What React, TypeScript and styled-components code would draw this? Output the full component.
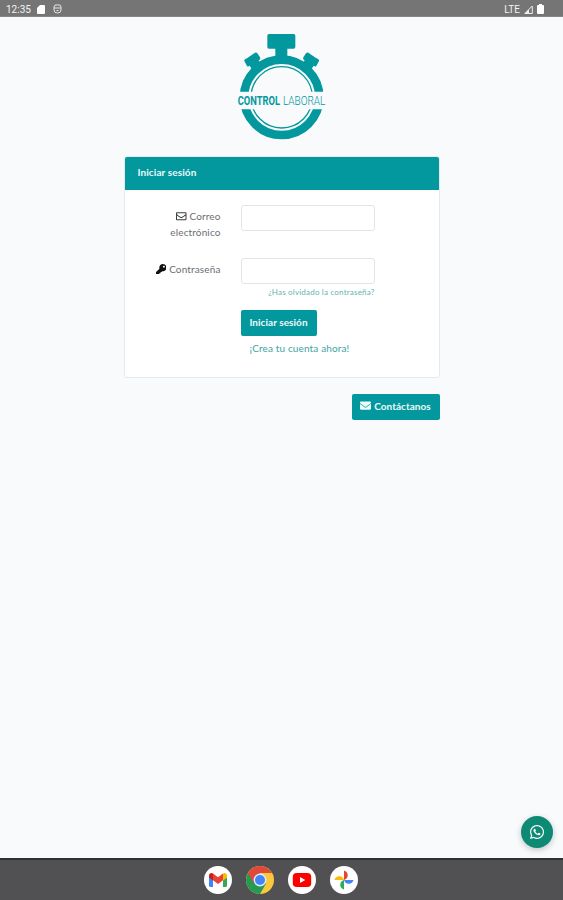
import React from "react";
import styled, { createGlobalStyle } from "styled-components";
import { FaRegEnvelope, FaEnvelope, FaKey, FaWhatsapp } from "react-icons/fa";

const teal = "#03989e";

const GlobalStyle = createGlobalStyle`
  * { box-sizing: border-box; }
  body { margin: 0; font-family: Lato, "Open Sans", sans-serif; }
`;

const Screen = styled.div`
  display: flex;
  flex-direction: column;
  width: 563px;
  height: 900px;
  overflow: hidden;
  background: #f8fafc;
`;

const StatusBar = styled.header`
  display: flex;
  align-items: center;
  justify-content: space-between;
  flex: none;
  height: 17px;
  padding: 2px 19px 0 6px;
  background: #757575;
  border-bottom: 1px solid #858585;
  color: #f4f4f4;
  font: 10px Roboto, sans-serif;
`;

const StatusGroup = styled.div<{ $gap: number }>`
  display: flex;
  align-items: center;
  gap: ${(p) => p.$gap}px;
  svg { display: block; }
`;

const Main = styled.main`
  flex: 1;
  display: flex;
  flex-direction: column;
  align-items: center;
  padding-top: 8px;
`;

const Logo = styled.svg`
  display: block;
  flex: none;
  width: 115px;
  height: 120px;
  margin-left: 2px;
`;

const Wordmark = styled.text<{ $weight: number }>`
  fill: ${teal};
  font-family: Roboto, sans-serif;
  font-size: 36px;
  font-weight: ${(p) => p.$weight};
`;

const Content = styled.div`
  display: flex;
  flex-direction: column;
  align-items: flex-end;
  width: 316px;
  margin-top: 11px;
`;

const Card = styled.section`
  width: 316px;
  height: 222px;
  border: 1px solid #e4eaeb;
  border-radius: 3px;
  background: #fff;
  overflow: hidden;
`;

const CardHeader = styled.h1`
  margin: -1px -1px 0;
  height: 34px;
  padding: 0 14px;
  background: ${teal};
  color: #eafafa;
  font-size: 10px;
  font-weight: 700;
  line-height: 33px;
  letter-spacing: 0.1px;
`;

const Form = styled.form`
  display: grid;
  grid-template-columns: 96px 134px;
  column-gap: 20px;
  padding-top: 15px;
`;

const Label = styled.label<{ $top: number }>`
  padding: ${(p) => p.$top}px 0 0 20px;
  text-align: right;
  color: #6b6f72;
  font-size: 10px;
  line-height: 16px;
  letter-spacing: 0.13px;
  svg { font-size: 10.5px; vertical-align: -1px; color: #3c4043; }
`;

const KeyIcon = styled(FaKey)`
  && { color: #111; }
`;

const Field = styled.div<{ $height: number }>`
  height: ${(p) => p.$height}px;
`;

const Input = styled.input`
  display: block;
  width: 134px;
  height: 26px;
  border: 1px solid #e2e5e7;
  border-radius: 3px;
  background: #fff;
  outline: none;
`;

const ForgotLink = styled.a`
  display: block;
  margin: 2px 0 0 -10px;
  color: #5fb5b3;
  text-align: right;
  font-size: 8px;
  line-height: 12px;
  white-space: nowrap;
  letter-spacing: 0.2px;
`;

const Button = styled.button<{ $width: number }>`
  display: flex;
  align-items: center;
  justify-content: center;
  gap: 3px;
  width: ${(p) => p.$width}px;
  height: 26px;
  padding: 0 0 2px;
  border: 0;
  border-radius: 2px;
  background: ${teal};
  color: #edfafa;
  font: 700 10px Lato, sans-serif;
  letter-spacing: 0.05px;
  white-space: nowrap;
`;

const Actions = styled.div`
  grid-column: 2;
  margin-top: -1px;
`;

const SignUpLink = styled.a`
  display: block;
  margin: 4px 0 0 9px;
  color: #40a5a2;
  font-size: 10px;
  line-height: 16px;
  letter-spacing: 0.14px;
`;

const ContactRow = styled.div`
  margin-top: 15.5px;
`;

const ChatButton = styled.button`
  position: absolute;
  left: 521px;
  top: 816px;
  display: grid;
  place-items: center;
  width: 32px;
  height: 32px;
  padding: 0;
  border: 0;
  border-radius: 50%;
  background: #0c8a74;
  color: #fff;
  font-size: 16px;
  box-shadow: 0 2px 6px rgba(0, 0, 0, 0.22);
`;

const Dock = styled.nav`
  display: flex;
  justify-content: center;
  align-items: center;
  gap: 14px;
  flex: none;
  height: 42px;
  padding-right: 1px;
  border-top: 2px solid #303032;
  background: #515153;
`;

const DockIcon = styled.svg`
  display: block;
  width: 28px;
  height: 28px;
`;

const StopwatchLogo = () => (
  <Logo viewBox="0 0 345 360" role="img" aria-label="Control Laboral">
    <defs>
      <clipPath id="dial-halves">
        <path d="M0 0h345v200H0zM0 253h345v107H0z" />
      </clipPath>
    </defs>
    <g fill={teal}>
      <path d="M132 27h74q5 0 5 5v34q0 5-5 5h-19v29h-36V71h-19q-5 0-5-5V32q0-5 5-5z" />
      <path id="knob" d="M67 99 90 83q4-2 7 2l8 12q2 4-1 7l-3 2 12 18-25 20-14-22-3 2q-3 2-5-1l-8-15q-2-5 9-9z" />
      <path transform="translate(340 0) scale(-1 1)" d="M67 99 90 83q4-2 7 2l8 12q2 4-1 7l-3 2 12 18-25 20-14-22-3 2q-3 2-5-1l-8-15q-2-5 9-9z" />
    </g>
    <g fill="none" stroke={teal} clipPath="url(#dial-halves)">
      <circle cx="170" cy="217" r="113" strokeWidth="26" />
      <circle cx="170" cy="217" r="92" strokeWidth="4" />
    </g>
    <Wordmark $weight={700} x="38" y="239" textLength="127" lengthAdjust="spacingAndGlyphs">CONTROL</Wordmark>
    <Wordmark $weight={300} x="174" y="239" textLength="127" lengthAdjust="spacingAndGlyphs">LABORAL</Wordmark>
  </Logo>
);

const GmailIcon = () => (
  <DockIcon viewBox="0 0 28 28">
    <circle cx="14" cy="14" r="14" fill="#fff" />
    <path d="M5 10v9.500q0 1.500 1.500 1.500H9V12z" fill="#4285f4" />
    <path d="M23 10v9.500q0 1.500-1.500 1.500H19V12z" fill="#34a853" />
    <path d="M19 9v5.500l4-3V9.400C23 7.200 20.600 6.200 19 7.500z" fill="#fbbc04" />
    <path d="M5 9.400v2.100l4 3V9L9 7.500C7.400 6.200 5 7.200 5 9.400z" fill="#c5221f" />
    <path d="M9 7.500l5 3.800 5-3.800v6.700l-5 3.800-5-3.800z" fill="#ea4335" />
  </DockIcon>
);

const ChromeIcon = () => (
  <DockIcon viewBox="0 0 28 28">
    <circle cx="14" cy="14" r="14" fill="#fbc83c" />
    <path d="M14 14 1.880 7A14 14 0 0 0 14 28l6-10.500z" fill="#239b56" />
    <path d="M14 14 8 17.500 1.880 7a14 14 0 0 1 24.240 0H14z" fill="#df483b" />
    <circle cx="14" cy="14" r="6.400" fill="#dfeafc" />
    <circle cx="14" cy="14" r="5" fill="#4285f4" />
  </DockIcon>
);

const YoutubeIcon = () => (
  <DockIcon viewBox="0 0 28 28">
    <circle cx="14" cy="14" r="14" fill="#fff" />
    <rect x="4.800" y="7" width="18.400" height="14" rx="3.800" fill="#f00" />
    <path d="m12 11 5.300 3-5.300 3z" fill="#fff" />
  </DockIcon>
);

const PhotosIcon = () => (
  <DockIcon viewBox="0 0 28 28">
    <circle cx="14" cy="14" r="14" fill="#fff" />
    <path d="M14 14V4.500a4.900 4.900 0 0 1 0 9.500z" fill="#ea4335" />
    <path d="M14 14h9.500a4.900 4.900 0 0 1-9.500 0z" fill="#4285f4" />
    <path d="M14 14v9.500a4.900 4.900 0 0 1 0-9.500z" fill="#34a853" />
    <path d="M14 14H4.500a4.900 4.900 0 0 1 9.500 0z" fill="#fbbc04" />
  </DockIcon>
);

export default function App() {
  return (
    <Screen>
      <GlobalStyle />
      <StatusBar>
        <StatusGroup $gap={6}>
          <span>12:35</span>
          <svg width="8" height="9" viewBox="0 0 8 9"><path d="M3 0h4q1 0 1 1v7q0 1-1 1H1Q0 9 0 8V3z" fill="#fff" /></svg>
          <svg width="11" height="10" viewBox="-2 0 11 10" fill="none" stroke="#e6e6e6"><path d="M2 1h5l1 2v3q0 3-3.500 3T1 6V3zM1 4h7M3.500 6.500h2" /></svg>
        </StatusGroup>
        <StatusGroup $gap={4}>
          <span>LTE</span>
          <svg width="9" height="9" viewBox="0 0 9 9"><path d="M8.300 1v7.500H.8z" fill="none" stroke="#eee" /><path d="M5 4.500v4H1z" fill="#eee" /></svg>
          <svg width="7" height="10" viewBox="0 0 7 10"><path d="M2 0h3v1h1q1 0 1 1v7q0 1-1 1H1Q0 10 0 9V2q0-1 1-1h1z" fill="#fff" /></svg>
        </StatusGroup>
      </StatusBar>
      <Main>
        <StopwatchLogo />
        <Content>
          <Card>
            <CardHeader>Iniciar sesión</CardHeader>
            <Form>
              <Label $top={3} htmlFor="email"><FaRegEnvelope /> Correo electrónico</Label>
              <Field $height={53}><Input id="email" type="email" /></Field>
              <Label $top={3} htmlFor="password"><KeyIcon /> Contraseña</Label>
              <Field $height={53}>
                <Input id="password" type="password" />
                <ForgotLink>¿Has olvidado la contraseña?</ForgotLink>
              </Field>
              <Actions>
                <Button type="button" $width={76}>Iniciar sesión</Button>
                <SignUpLink>¡Crea tu cuenta ahora!</SignUpLink>
              </Actions>
            </Form>
          </Card>
          <ContactRow>
            <Button type="button" $width={88}><FaEnvelope size={11} />Contáctanos</Button>
          </ContactRow>
        </Content>
      </Main>
      <Dock>
        <GmailIcon />
        <ChromeIcon />
        <YoutubeIcon />
        <PhotosIcon />
      </Dock>
      <ChatButton aria-label="WhatsApp"><FaWhatsapp /></ChatButton>
    </Screen>
  );
}
